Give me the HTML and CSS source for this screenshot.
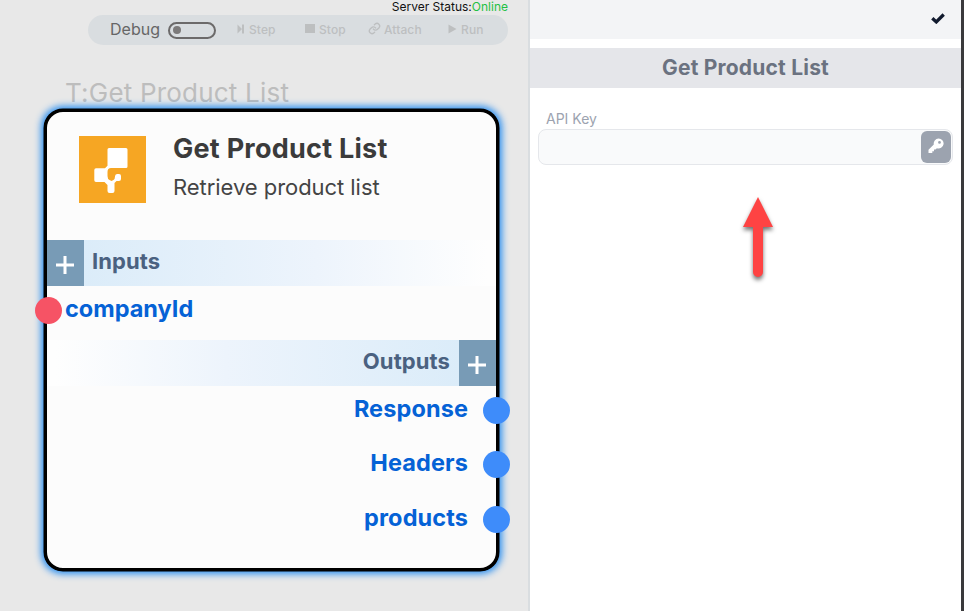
FILE: index.html
```html
<!DOCTYPE html>
<html lang="en">
<head>
<meta charset="utf-8">
<title>Get Product List</title>
<link rel="stylesheet" href="styles.css">
</head>
<body>
<main class="app">
  <section class="canvas">
    <div class="status">Server Status:<span class="online">Online</span></div>
    <div class="toolbar">
      <span class="debug">Debug</span>
      <span class="toggle"></span>
      <span class="tool step"><svg width="8" height="10" viewBox="0 0 8 10"><path d="M0.500 0.500l4.500 4.500-4.500 4.500zM5 0.500h2v9H5z"/></svg>Step</span>
      <span class="tool stop"><svg width="10" height="10" viewBox="0 0 10 10"><path d="M0 0h10v9H0z"/></svg>Stop</span>
      <span class="tool attach"><svg width="13" height="13" viewBox="0 0 24 24"><path class="line" d="M10 13a5 5 0 0 0 7.500.5l3-3a5 5 0 0 0-7-7l-1.700 1.700M14 11a5 5 0 0 0-7.500-.5l-3 3a5 5 0 0 0 7 7l1.700-1.700"/></svg>Attach</span>
      <span class="tool run"><svg width="9" height="10" viewBox="0 0 9 10"><path d="M0.500 0.500l8 4.500-8 4.500z"/></svg>Run</span>
    </div>
    <article class="node">
      <div class="node-tag">T:Get Product List</div>
      <header class="node-head">
        <svg class="logo" width="67" height="67" viewBox="0 0 67 67"><rect width="67" height="67" fill="#f6a623"/><path fill="#fff" d="M30 12h17q1.500 0 1.500 1.500v17q0 1.500-1.500 1.500H32q-3.500 0-3.500 4v4q0 3 2 4l2 1 2-1q1.500-1 1.500-3.500 0-2.500 2-2.500h2q2 0 2 2v3q0 2-2 2h-2.500l-2 2v8q0 2-2 2h-3q-2 0-2-2V49l-3-3H17q-1.700 0-1.700-1.700V34q0-1.700 1.700-1.700h9l2.500-2.500V13.500q0-1.500 1.500-1.500z"/></svg>
        <div>
          <h1 class="node-title">Get Product List</h1>
          <p class="node-desc">Retrieve product list</p>
        </div>
      </header>
      <div class="band inputs">
        <span class="add"><svg width="18" height="18" viewBox="0 0 18 18"><path d="M0 9h18M9 0v18"/></svg></span>
        <span class="band-name">Inputs</span>
      </div>
      <div class="port in"><span>companyId</span><i class="pin"></i></div>
      <div class="band outputs">
        <span class="band-name">Outputs</span>
        <span class="add"><svg width="18" height="18" viewBox="0 0 18 18"><path d="M0 9h18M9 0v18"/></svg></span>
      </div>
      <div class="port out"><span>Response</span><i class="pin"></i></div>
      <div class="port out"><span>Headers</span><i class="pin"></i></div>
      <div class="port out"><span>products</span><i class="pin"></i></div>
    </article>
  </section>
  <aside class="panel">
    <div class="panel-bar"><svg width="14" height="11" viewBox="0 0 14 11"><path d="M1.300 5.200l4 3.700L12.700 1.500"/></svg></div>
    <h2 class="panel-title">Get Product List</h2>
    <div class="field">
      <label class="label" for="key">API Key</label>
      <div class="control">
        <input id="key" class="input" type="text">
        <button class="key" aria-label="Key"><svg width="16" height="16" viewBox="0 0 16 16"><path fill-rule="evenodd" d="M10.500 0.500a5 5 0 1 1-1.600 9.700L7.500 11.500H6v1.700H4.300V15H.5v-3.200l5.300-5.300A5 5 0 0 1 10.500.5zM11.500 3a1.400 1.400 0 1 0 0 2.800 1.400 1.400 0 0 0 0-2.800z"/></svg></button>
      </div>
    </div>
    <svg class="arrow" width="60" height="100" viewBox="0 0 60 100"><path d="M30 7l15 30H35v45a5 5 0 0 1-10 0V37H15z"/></svg>
  </aside>
</main>
</body>
</html>
```
FILE: styles.css
```css
* { box-sizing: border-box; }
body { margin: 0; font-family: Inter, "Liberation Sans", sans-serif; font-optical-sizing: none; }
h1, h2, p { margin: 0; }
svg { display: block; flex: none; }
.app { display: flex; width: 964px; height: 611px; overflow: hidden; background: #fff; }

.canvas { position: relative; isolation: isolate; width: 530px; flex: none; background: #e8e8e8; border-right: 2px solid #d9dde0; }
.status { height: 15px; padding-right: 20px; text-align: right; font-size: 12px; line-height: 14px; color: #111; }
.online { color: #1fc043; }
.toolbar { display: flex; align-items: center; width: 420px; height: 30px; margin-left: 88px; padding-left: 22px; border-radius: 15px; background: #d9dde0; }
.debug { width: 58px; margin-top: -2px; font-size: 16px; color: #666; }
.toggle { width: 48px; height: 17px; border: 2px solid #6c6a6a; border-radius: 9px; padding: 2px 3px; }
.toggle::before { content: ""; display: block; width: 8px; height: 8px; border-radius: 50%; background: #7c7a7a; }
.tool { display: flex; align-items: center; gap: 4px; margin-top: -1px; font-size: 12px; font-weight: 500; letter-spacing: 0.1px; color: #bdbfc0; fill: #bdbfc0; }
.tool svg { margin-top: -2px; }
.step { width: 68px; margin-left: 21px; }
.stop { width: 63px; }
.attach { width: 80px; gap: 3px; }
.line { fill: none; stroke: #bdbfc0; stroke-width: 2.5; stroke-linecap: round; }

.node { position: absolute; left: 44px; top: 109px; width: 455px; height: 462px; border: 3px solid #000; border-radius: 19px; background: #fcfcfc; box-shadow: 0 0 0 0.500px #000, 0 0 7px 2.500px #2b8ff0; }
.node-tag { position: absolute; left: 18px; top: -35px; font-size: 26px; line-height: 32px; letter-spacing: 0.200px; color: #bdbdbd; white-space: nowrap; z-index: -1; }
.node-head { display: flex; gap: 27px; height: 128px; padding: 24px 0 0 32px; }
.node-title { margin-top: -4px; font-size: 27px; line-height: 34px; font-weight: 700; letter-spacing: 0.250px; color: #3b3b3b; }
.node-desc { margin-top: 6px; font-size: 22px; line-height: 30px; letter-spacing: -0.050px; color: #444; }
.band { display: flex; height: 46px; font-size: 22px; font-weight: 700; letter-spacing: 0.1px; color: #4a6180; }
.inputs { background: linear-gradient(90deg, #dbecf9 8%, #edf4fc 60%, #fefefe 98%); }
.outputs { justify-content: flex-end; background: linear-gradient(270deg, #dbecf9 8%, #edf4fc 60%, #fefefe 98%); }
.add { display: grid; place-items: center; width: 37px; padding: 3px 2px 0 0; background: #789bb6; }
.add path { stroke: #fff; stroke-width: 3; }
.band-name { padding: 0 9px 0 8px; line-height: 43px; }
.port { position: relative; height: 54.400px; font-size: 23.500px; line-height: 46px; font-weight: 700; letter-spacing: 0.1px; color: #0562d6; }
.in { height: 54px; padding-left: 18px; letter-spacing: 0; }
.out { padding-right: 28px; text-align: right; }
.pin { position: absolute; top: 11px; width: 27px; height: 27px; border-radius: 50%; }
.in .pin { left: -12.500px; background: #f65365; }
.out .pin { right: -14px; background: #3e8cfa; }

.panel { position: relative; flex: 1; border-right: 3px solid #3a3a3c; }
.panel-bar { display: flex; justify-content: flex-end; height: 39px; padding: 13px 16px 0 0; background: #f3f4f6; }
.panel-bar path { fill: none; stroke: #111a2e; stroke-width: 3.3; }
.panel-title { height: 40px; margin-top: 9px; background: #e5e6ea; text-align: center; font-size: 21px; line-height: 40px; font-weight: 700; letter-spacing: 0.200px; color: #6b7280; }
.field { padding: 21px 8px 0; }
.label { display: block; height: 20px; padding-left: 8px; font-size: 14px; line-height: 20px; color: #9ca3af; }
.control { display: flex; width: 415px; height: 36px; padding: 1px; border: 1px solid #e5e7eb; border-radius: 8px; background: #f9fafb; }
.input { flex: 1; min-width: 0; border: 0; background: none; outline: none; }
.key { display: grid; place-items: center; width: 30px; height: 32px; padding: 0 0 3px; border: 0; border-radius: 6px; background: #9ca3af; fill: #fff; }
.arrow { position: absolute; left: 198px; top: 190px; fill: #fe4343; filter: drop-shadow(0 3px 2px rgba(0, 0, 0, 0.55)); }
```
